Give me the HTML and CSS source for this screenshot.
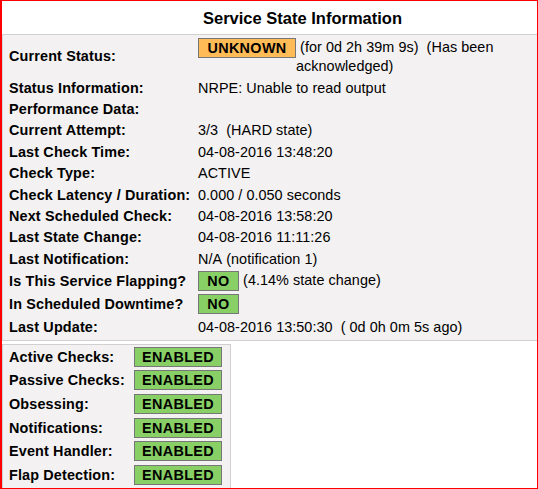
FILE: index.html
```html
<html>
	<head>
		<title>Service State Information</title>
		<link rel="stylesheet" href="styles.css">
	</head>
	<body>
		<div class="frame">
			<div class="title">Service State Information</div>

			<div class="state">
				<div class="row first">
					<div class="var">Current Status:</div>
					<div class="val wrap"><span class="badge unknown">UNKNOWN</span>&nbsp;(for 0d 2h 39m 9s)&nbsp;&nbsp;(Has been acknowledged)</div>
				</div>
				<div class="row">
					<div class="var">Status Information:</div>
					<div class="val">NRPE: Unable to read output</div>
				</div>
				<div class="row">
					<div class="var">Performance Data:</div>
					<div class="val"></div>
				</div>
				<div class="row">
					<div class="var">Current Attempt:</div>
					<div class="val">3/3&nbsp;&nbsp;(HARD state)</div>
				</div>
				<div class="row">
					<div class="var">Last Check Time:</div>
					<div class="val">04-08-2016 13:48:20</div>
				</div>
				<div class="row">
					<div class="var">Check Type:</div>
					<div class="val">ACTIVE</div>
				</div>
				<div class="row">
					<div class="var">Check Latency / Duration:</div>
					<div class="val">0.000&nbsp;/&nbsp;0.050 seconds</div>
				</div>
				<div class="row">
					<div class="var">Next Scheduled Check:</div>
					<div class="val">04-08-2016 13:58:20</div>
				</div>
				<div class="row">
					<div class="var">Last State Change:</div>
					<div class="val">04-08-2016 11:11:26</div>
				</div>
				<div class="row">
					<div class="var">Last Notification:</div>
					<div class="val">N/A&nbsp;(notification 1)</div>
				</div>
				<div class="row tall">
					<div class="var">Is This Service Flapping?</div>
					<div class="val"><span class="badge ok short">NO</span>&nbsp;(4.14% state change)</div>
				</div>
				<div class="row tall">
					<div class="var">In Scheduled Downtime?</div>
					<div class="val"><span class="badge ok short">NO</span></div>
				</div>
				<div class="row tall">
					<div class="var">Last Update:</div>
					<div class="val">04-08-2016 13:50:30&nbsp;&nbsp;( 0d 0h 0m 5s ago)</div>
				</div>
			</div>

			<div class="checks">
				<div class="check">
					<div class="var">Active Checks:</div>
					<span class="badge ok">ENABLED</span>
				</div>
				<div class="check">
					<div class="var">Passive Checks:</div>
					<span class="badge ok">ENABLED</span>
				</div>
				<div class="check">
					<div class="var">Obsessing:</div>
					<span class="badge ok">ENABLED</span>
				</div>
				<div class="check">
					<div class="var">Notifications:</div>
					<span class="badge ok">ENABLED</span>
				</div>
				<div class="check">
					<div class="var">Event Handler:</div>
					<span class="badge ok">ENABLED</span>
				</div>
				<div class="check">
					<div class="var">Flap Detection:</div>
					<span class="badge ok">ENABLED</span>
				</div>
			</div>
		</div>
	</body>
</html>
```

FILE: styles.css
```css
body {
	margin: 0;
	font-family: "Liberation Sans", Arial, sans-serif;
	font-size: 14.4px;
	color: #000;
	background: #fff;
}

.frame {
	box-sizing: border-box;
	width: 538px;
	height: 489px;
	border: 1px solid #f00;
	border-left-width: 2px;
	overflow: hidden;
}

.title {
	width: 601px;
	height: 32px;
	line-height: 32px;
	padding-top: 1px;
	text-align: center;
	font-weight: bold;
	font-size: 16.5px;
}

.state {
	background: #f3f1f1;
	border-top: 1px solid #d0d0d0;
	border-bottom: 1px solid #d0d0d0;
	border-left: 1px solid #d8d8d8;
	padding: 0 0 1.6px 6px;
}

.row {
	display: flex;
	align-items: center;
	height: 21.375px;
}

.row.first {
	height: 42px;
}

.row.tall {
	height: 23px;
}

.var {
	width: 189px;
	flex-shrink: 0;
	font-weight: bold;
	letter-spacing: 0.15px;
}

.val {
	flex: 1;
	white-space: nowrap;
	letter-spacing: 0.05px;
}

.val.wrap {
	white-space: normal;
	align-self: flex-start;
	padding-top: 3px;
	line-height: 19px;
}

.badge {
	display: inline-block;
	box-sizing: border-box;
	width: 88px;
	height: 20px;
	line-height: 18px;
	border: 1px solid #777;
	font-weight: bold;
	letter-spacing: 0.35px;
	text-align: center;
	vertical-align: middle;
}

.badge.short {
	width: 41px;
}

.val.wrap .badge {
	float: left;
	margin-bottom: 2px;
}

.unknown {
	width: 98px;
	background: #ffbb55;
}

.ok {
	background: #88d066;
}

.checks {
	box-sizing: border-box;
	width: 229px;
	margin-top: 3px;
	padding: 0 0 0 6px;
	background: #f3f1f1;
	border: 1px solid #d0d0d0;
	border-bottom: none;
	height: 200px;
}

.check {
	display: flex;
	align-items: center;
	height: 23.6px;
}

.check .var {
	width: 125px;
}
```
